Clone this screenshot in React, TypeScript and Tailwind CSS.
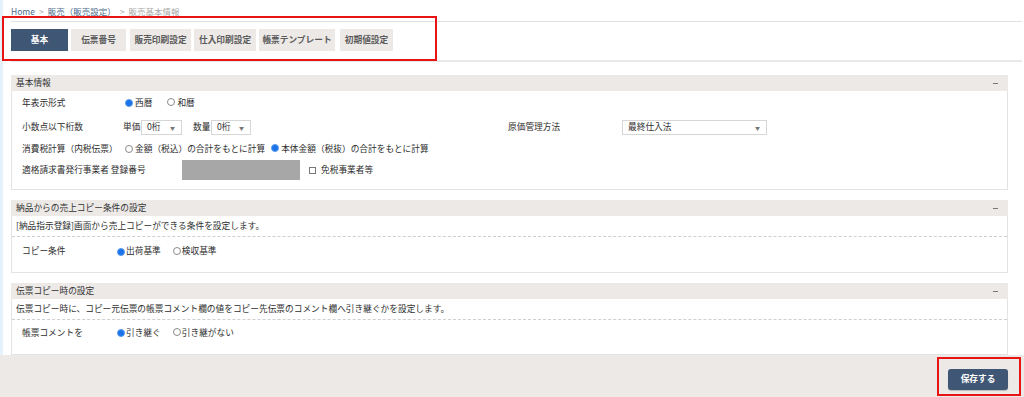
import type { ReactNode } from 'react'

function Radio({ checked }: { checked?: boolean }) {
  return checked ? (
    <span className="inline-block w-[8px] h-[8px] rounded-full bg-[#1a73e8] border border-[#5b9bef] shrink-0" />
  ) : (
    <span className="inline-block w-[8px] h-[8px] rounded-full bg-white border border-[#8a8a8a] shrink-0" />
  )
}

function Select({ value, className }: { value: string; className: string }) {
  return (
    <div className={`h-[15px] border border-[#d6d6d6] bg-white flex items-center justify-between pl-[5px] pr-[6px] ${className}`}>
      <span>{value}</span>
      <span className="text-[5px] text-[#777]">▼</span>
    </div>
  )
}

function Panel({ title, className, children }: { title: string; className: string; children: ReactNode }) {
  return (
    <div className={`mr-[14px] ${className}`}>
      <div className="h-[16px] bg-[#ece9e7] flex items-center justify-between pl-[5px] pr-[10px] text-[#333]">
        <span>{title}</span>
        <span className="w-[5px] h-[1px] bg-[#777]" />
      </div>
      <div className="border border-t-0 border-[#e3e3e3] bg-white">{children}</div>
    </div>
  )
}

const tabs = [
  { label: '伝票番号', w: 'w-[55px] ml-[3px]' },
  { label: '販売印刷設定', w: 'w-[61px] ml-[4px]' },
  { label: '仕入印刷設定', w: 'w-[62px] ml-[3px]' },
  { label: '帳票テンプレート', w: 'w-[76px] ml-[3px]' },
  { label: '初期値設定', w: 'w-[53px] ml-[5px]' },
]

export default function App() {
  return (
    <div className="relative w-[1024px] h-[397px] overflow-hidden bg-white flex flex-col text-[8.7px] leading-none text-[#2e2e2e] font-['Noto_Sans_CJK_JP','Noto_Sans',sans-serif]">
      <div className="h-[355px] border-l-[3px] border-[#e6f1f9] pl-[8px] pr-[2px]">
        {/* breadcrumb */}
        <div className="h-[22px] border-b border-[#e2e2e2] flex items-center gap-[4px] pt-[2px] text-[8.5px]">
          <span className="text-[#4d6b8c] underline">Home</span>
          <span className="text-[#aaa]">&gt;</span>
          <span className="text-[#4d6b8c] underline">販売（販売設定）</span>
          <span className="text-[#aaa]">&gt;</span>
          <span className="text-[#aaa]">販売基本情報</span>
        </div>

        {/* tabs */}
        <div className="h-[40px] border-b-2 border-[#e8e8e8] pt-[7px] flex items-start font-bold">
          <div className="w-[57px] h-[22px] bg-[#3f5674] text-white flex items-center justify-center">基本</div>
          {tabs.map((t) => (
            <div key={t.label} className={`${t.w} h-[22px] bg-[#ece9e7] text-[#5a5a5a] flex items-center justify-center`}>
              {t.label}
            </div>
          ))}
        </div>

        <Panel title="基本情報" className="mt-[13px]">
          <div className="pl-[10px] pb-[8px]">
            <div className="h-[24px] flex items-center">
              <span className="w-[103px]">年表示形式</span>
              <Radio checked />
              <span className="ml-[2px]">西暦</span>
              <span className="ml-[15px]"><Radio /></span>
              <span className="ml-[2px]">和暦</span>
            </div>
            <div className="h-[24px] flex items-center">
              <span className="w-[101px]">小数点以下桁数</span>
              <span className="w-[385px] flex items-center">
                <span className="w-[18px]">単価</span>
                <Select value="0桁" className="w-[41px]" />
                <span className="ml-[11px] w-[18px]">数量</span>
                <Select value="0桁" className="w-[40px]" />
              </span>
              <span className="w-[114px]">原価管理方法</span>
              <Select value="最終仕入法" className="w-[145px]" />
            </div>
            <div className="h-[20px] flex items-center">
              <span className="w-[103px]">消費税計算（内税伝票）</span>
              <Radio />
              <span className="ml-[2px]">金額（税込）の合計をもとに計算</span>
              <span className="ml-[6px]"><Radio checked /></span>
              <span className="ml-[2px]">本体金額（税抜）の合計をもとに計算</span>
            </div>
            <div className="h-[22px] flex items-center">
              <span className="w-[160px]">適格請求書発行事業者 登録番号</span>
              <span className="w-[118px] h-[20px] bg-[#a7a7a7]" />
              <span className="ml-[9px] w-[7px] h-[7px] border border-[#777] bg-white" />
              <span className="ml-[5px]">免税事業者等</span>
            </div>
          </div>
        </Panel>

        <Panel title="納品からの売上コピー条件の設定" className="mt-[10px]">
          <div className="h-[21px] flex items-center pl-[4px] border-b border-dashed border-[#cfcfcf]">
            [納品指示登録]画面から売上コピーができる条件を設定します。
          </div>
          <div className="h-[35px] flex items-center pl-[10px] pb-[6px]">
            <span className="w-[95px]">コピー条件</span>
            <Radio checked />
            <span className="ml-[1px]">出荷基準</span>
            <span className="ml-[12px]"><Radio /></span>
            <span className="ml-[1px]">検収基準</span>
          </div>
        </Panel>

        <Panel title="伝票コピー時の設定" className="mt-[10px]">
          <div className="h-[21px] flex items-center pl-[4px] border-b border-dashed border-[#cfcfcf]">
            伝票コピー時に、コピー元伝票の帳票コメント欄の値をコピー先伝票のコメント欄へ引き継ぐかを設定します。
          </div>
          <div className="h-[34px] flex items-center pl-[10px] pb-[8px]">
            <span className="w-[95px]">帳票コメントを</span>
            <Radio checked />
            <span className="ml-[1px]">引き継ぐ</span>
            <span className="ml-[12px]"><Radio /></span>
            <span className="ml-[1px]">引き継がない</span>
          </div>
        </Panel>
      </div>

      {/* footer */}
      <div className="flex-1 bg-[#ece9e7] flex justify-end items-start pt-[14px] pr-[16px]">
        <button className="w-[60px] h-[21px] rounded-[3px] bg-[#3f5674] text-white font-bold text-[8.7px] shadow-[0_1px_1px_rgba(0,0,0,0.2)]">
          保存する
        </button>
      </div>

      {/* annotation boxes */}
      <div className="absolute left-[2px] top-[16px] w-[435px] h-[45px] border-2 border-[#e81313]" />
      <div className="absolute left-[937px] top-[357px] w-[84px] h-[39px] border-2 border-[#e81313]" />
    </div>
  )
}
